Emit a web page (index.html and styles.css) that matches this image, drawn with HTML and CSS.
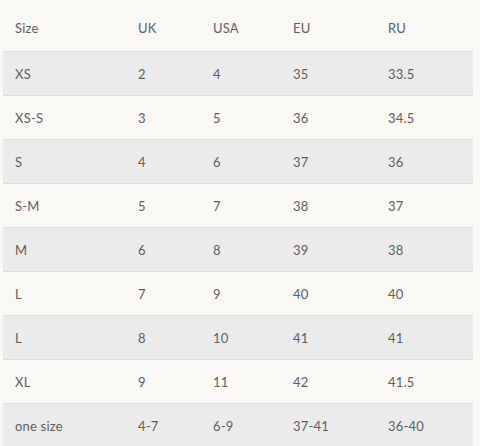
FILE: index.html
```html
<!DOCTYPE html>
<html>
<head>
<meta charset="utf-8">
<link rel="stylesheet" href="styles.css">
</head>
<body>
<div class="chart">
  <div class="row head"><span>Size</span><span>UK</span><span>USA</span><span>EU</span><span>RU</span></div>
  <div class="row alt"><span>XS</span><span>2</span><span>4</span><span>35</span><span>33.5</span></div>
  <div class="row"><span>XS-S</span><span>3</span><span>5</span><span>36</span><span>34.5</span></div>
  <div class="row alt"><span>S</span><span>4</span><span>6</span><span>37</span><span>36</span></div>
  <div class="row"><span>S-M</span><span>5</span><span>7</span><span>38</span><span>37</span></div>
  <div class="row alt"><span>M</span><span>6</span><span>8</span><span>39</span><span>38</span></div>
  <div class="row"><span>L</span><span>7</span><span>9</span><span>40</span><span>40</span></div>
  <div class="row alt"><span>L</span><span>8</span><span>10</span><span>41</span><span>41</span></div>
  <div class="row"><span>XL</span><span>9</span><span>11</span><span>42</span><span>41.5</span></div>
  <div class="row alt last"><span>one size</span><span>4-7</span><span>6-9</span><span>37-41</span><span>36-40</span></div>
</div>
</body>
</html>
```
FILE: styles.css
```css
html, body {
  margin: 0;
  padding: 0;
  background: #f9f8f5;
}
body {
  font-family: Lato, "Open Sans", sans-serif;
  font-size: 13px;
  color: #5e5e5e;
  letter-spacing: 0.2px;
}
.chart {
  width: 470px;
  margin-left: 3px;
}
.row {
  display: grid;
  grid-template-columns: 123px 75px 80px 95px 97px;
  align-items: center;
  height: 43px;
  border-top: 1px solid #dcdcdc;
}
.row span {
  padding-left: 12px;
}
.head {
  height: 51px;
  border-top: none;
  padding-top: 5px;
  box-sizing: border-box;
}
.alt {
  background: #ebebeb;
}
.last {
  border-bottom: 1px solid #dcdcdc;
}
```
